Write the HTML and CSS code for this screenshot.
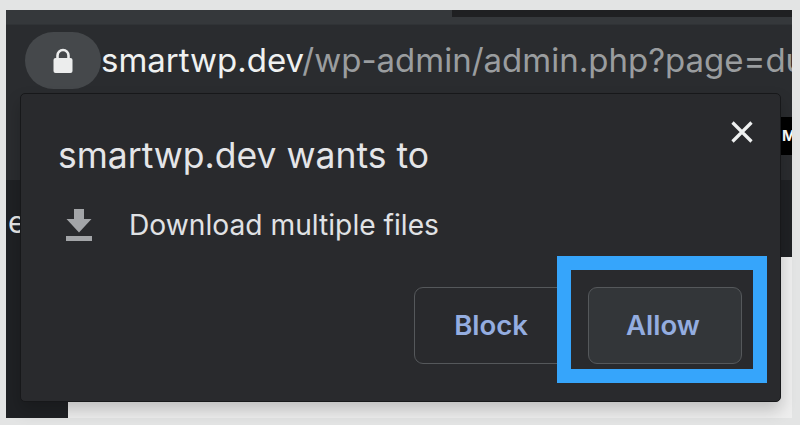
FILE: index.html
```html
<!DOCTYPE html>
<html lang="en">
<head>
    <meta charset="UTF-8">
    <meta name="viewport" content="width=device-width, initial-scale=1.0">
    <title>smartwp.dev wants to</title>
    <link rel="stylesheet" href="styles.css">
</head>
<body>
    <div class="shot">
        <div class="tabstrip"><div class="tab-edge"></div></div>
        <div class="toolbar">
            <div class="lock-pill">
                <svg class="lock" width="22" height="26" viewBox="0 0 22 26">
                    <path d="M5.500 11V7.500a5.500 5.500 0 0 1 11 0V11" fill="none" stroke="#eceded" stroke-width="2.600"/>
                    <rect x="1.500" y="10" width="19" height="15" rx="2" fill="#eceded"/>
                </svg>
            </div>
            <div class="url"><span class="host">smartwp.dev</span><span class="path">/wp-admin/admin.php?page=du</span></div>
        </div>
        <div class="page">
            <div class="page-top">
                <div class="side-letter">e</div>
            </div>
            <div class="page-bottom">
                <div class="sidebar"></div>
                <div class="content"></div>
            </div>
        </div>
        <div class="black-bar">M</div>

        <div class="dialog">
            <div class="dialog-head">
                <h2 class="dialog-title">smartwp.dev wants to</h2>
                <svg class="close" width="24" height="24" viewBox="0 0 24 24">
                    <path d="M2.500 2.500L21.500 21.500M21.500 2.500L2.500 21.500" stroke="#eef0f0" stroke-width="3.200" fill="none"/>
                </svg>
            </div>
            <div class="perm">
                <svg class="perm-icon" width="26" height="32" viewBox="0 0 26 32">
                    <path d="M8 0h10v10h7.500L13 23.500 0.500 10H8z" fill="#a3a5a8"/>
                    <rect x="0" y="27" width="26" height="5" fill="#a3a5a8"/>
                </svg>
                <span>Download multiple files</span>
            </div>
            <div class="actions">
                <button class="btn">Block</button>
                <button class="btn btn-allow">Allow</button>
            </div>
        </div>
        <div class="highlight"></div>
    </div>
</body>
</html>
```

FILE: styles.css
```css
* {
    box-sizing: border-box;
}
html, body {
    height: 100%;
}
body {
    margin: 0;
    padding: 10px 8px 7px 6px;
    background-color: #e3e4e4;
    font-family: Inter, "Liberation Sans", sans-serif;
    overflow: hidden;
}
.shot {
    position: relative;
    display: flex;
    flex-direction: column;
    height: 408px;
}
.tabstrip {
    height: 14px;
    background-color: #35383b;
    flex-shrink: 0;
    display: flex;
    justify-content: flex-end;
}
.tab-edge {
    width: 340px;
    height: 7px;
    background-color: #1f2022;
}
.toolbar {
    height: 156px;
    flex-shrink: 0;
    display: flex;
    align-items: flex-start;
    padding: 7px 0 0 19px;
    background-color: #2a2c2f;
    border-top: 1px solid #303336;
}
.lock-pill {
    width: 76px;
    height: 57px;
    border-radius: 29px;
    background-color: #45484b;
    display: flex;
    align-items: center;
    justify-content: center;
    flex-shrink: 0;
}
.url {
    font-size: 33px;
    line-height: 57px;
    white-space: nowrap;
    overflow: hidden;
    flex: 1;
}
.host {
    color: #eff1f1;
}
.path {
    color: #9a9d9f;
}
.page {
    flex: 1;
    display: flex;
    flex-direction: column;
}
.page-top {
    height: 77px;
    background-color: #1f2124;
    color: #e8e8e8;
}
.side-letter {
    font-size: 30px;
    line-height: 36px;
    margin: 24px 0 0 2px;
}
.black-bar {
    position: absolute;
    right: 0;
    top: 107px;
    width: 11px;
    height: 38px;
    padding-left: 1px;
    background-color: #000;
    color: #fff;
    font-size: 15px;
    font-weight: 700;
    line-height: 38px;
    overflow: hidden;
}
.page-bottom {
    flex: 1;
    display: flex;
}
.sidebar {
    width: 62px;
    background-color: #1f2124;
}
.content {
    flex: 1;
    background-color: #eeeeee;
}
.dialog {
    position: absolute;
    left: 14px;
    top: 83px;
    width: 761px;
    height: 309px;
    padding: 37px 26px 37px 37px;
    display: flex;
    flex-direction: column;
    background-color: #292a2d;
    border: 1px solid #17181a;
    border-radius: 5px;
    box-shadow: 0 8px 16px rgba(0, 0, 0, 0.2);
}
.dialog-head {
    display: flex;
    justify-content: space-between;
    align-items: flex-start;
}
.dialog-title {
    margin: 0;
    font-size: 35.500px;
    font-weight: 400;
    line-height: 50px;
    color: #e4e5e8;
}
.close {
    margin-top: -11px;
}
.perm {
    display: flex;
    align-items: center;
    gap: 37px;
    margin: 27px 0 0 8px;
    font-size: 28.200px;
    line-height: 34px;
    color: #e0e2e5;
}
.actions {
    margin-top: auto;
    display: flex;
    justify-content: flex-end;
    gap: 20px;
    padding-right: 12px;
}
.btn {
    width: 154px;
    height: 77px;
    padding: 0 0 2px;
    background: transparent;
    border: 1px solid #55585b;
    border-radius: 9px;
    color: #94ade0;
    font-family: inherit;
    font-size: 27.500px;
    font-weight: 600;
}
.btn-allow {
    background-color: #333639;
    padding-right: 4px;
}
.highlight {
    position: absolute;
    left: 551px;
    top: 246px;
    width: 210px;
    height: 127px;
    border: 14px solid #36a5fb;
}
```
